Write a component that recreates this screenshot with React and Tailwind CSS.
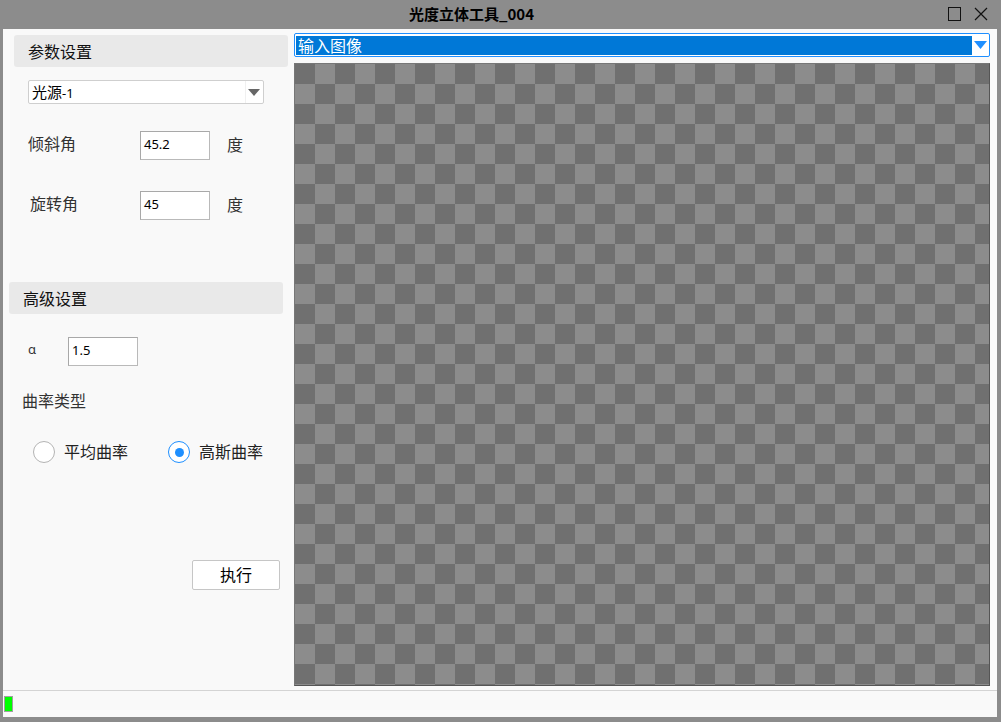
import React from 'react';

const cjk = "font-['Noto_Sans_CJK_SC','Noto_Sans',sans-serif]";
const num = "font-['Noto_Sans','Liberation_Sans',sans-serif]";

function NumBox({ value, className = '' }) {
  return (
    <div className={`h-[29px] w-[70px] border border-[#b9b9b9] border-t-[#a8a8a8] border-l-[#a8a8a8] bg-white pl-[3px] pt-[3px] text-[13px] leading-[18px] text-black ${num} ${className}`}>
      {value}
    </div>
  );
}

function SectionHead({ title, className = '' }) {
  return (
    <div className={`flex h-[32px] w-[274px] items-center rounded-[3px] bg-[#e9e9e9] pl-[14px] text-[16px] text-[#111] ${className}`}>
      {title}
    </div>
  );
}

function Radio({ checked, label }) {
  return (
    <div className="flex items-center">
      {checked ? (
        <div className="flex h-[22px] w-[22px] items-center justify-center rounded-full border border-[#1e8fff] bg-white">
          <div className="h-[9px] w-[9px] rounded-full bg-[#1e8fff]" />
        </div>
      ) : (
        <div className="h-[22px] w-[22px] rounded-full border border-[#b4b4b4] bg-white" />
      )}
      <span className="-mt-[3px] ml-[9px] text-[16px] text-[#222]">{label}</span>
    </div>
  );
}

export default function App() {
  return (
    <div className={`flex h-[722px] w-[1001px] flex-col bg-[#8c8c8c] ${cjk}`}>
      {/* title bar */}
      <div className="relative flex h-[29px] items-center justify-center pr-[58px]">
        <span className="text-[15px] font-bold text-black">光度立体工具_004</span>
        <div className="absolute right-[13px] top-[7px] flex items-center gap-[13px]">
          <div className="h-[14px] w-[13px] border border-[#111]" />
          <svg width="14" height="14" viewBox="0 0 14 14">
            <path d="M1 1 L13 13 M13 1 L1 13" stroke="#111" strokeWidth="1.2" />
          </svg>
        </div>
      </div>

      <div className="ml-[3px] mr-[4px] flex h-[688px] flex-col bg-[#f9f9f9]">
        <div className="flex h-[661px]">
          {/* left panel */}
          <div className="flex w-[291px] flex-col">
            <SectionHead title="参数设置" className="ml-[11px] mt-[6px] w-[269px]" />

            <div className="ml-[25px] mt-[13px] flex h-[24px] w-[236px] items-center justify-between rounded-[2px] border border-[#cfcfcf] bg-white">
              <span className="pl-[3px] text-[15px] text-black">
                光源<span className={`text-[13px] ${num}`}>-1</span>
              </span>
              <div className="mr-[1px] flex h-full w-[17px] items-center justify-center border-l border-[#f0f0f0]">
                <svg width="12" height="7" viewBox="0 0 12 7">
                  <path d="M0 0 L12 0 L6 7 Z" fill="#666" />
                </svg>
              </div>
            </div>

            <div className="mt-[27px] flex items-center">
              <span className="-mt-[5px] ml-[25px] w-[112px] text-[16px] text-[#333]">倾斜角</span>
              <NumBox value="45.2" />
              <span className="-mt-[3px] ml-[17px] text-[16px] text-[#333]">度</span>
            </div>

            <div className="mt-[31px] flex items-center">
              <span className="-mt-[5px] ml-[27px] w-[110px] text-[16px] text-[#333]">旋转角</span>
              <NumBox value="45" />
              <span className="-mt-[3px] ml-[17px] text-[16px] text-[#333]">度</span>
            </div>

            <SectionHead title="高级设置" className="ml-[6px] mt-[62px]" />

            <div className="mt-[23px] flex items-center">
              <span className={`-mt-[3px] ml-[25px] w-[40px] text-[13px] text-[#333] ${num}`}>α</span>
              <NumBox value="1.5" />
            </div>

            <div className="ml-[19px] mt-[23px] text-[16px] leading-[22px] text-[#333]">曲率类型</div>

            <div className="ml-[30px] mt-[30px] flex items-center">
              <Radio label="平均曲率" />
              <div className="ml-[40px]">
                <Radio checked label="高斯曲率" />
              </div>
            </div>

            <button className="ml-[189px] mt-[97px] h-[30px] w-[88px] rounded-[2px] border border-[#c6c6c6] bg-white pb-[2px] text-[16px] text-black">
              执行
            </button>
          </div>

          {/* right panel */}
          <div className="flex w-[696px] flex-col pt-[4px]">
            <div className="flex h-[24px] items-center rounded-[2px] border border-[#1e8fff] bg-white pl-[1px]">
              <div className="flex h-[19px] w-[676px] items-center bg-[#0078d7] pl-[2px] text-[16px] text-white">
                输入图像
              </div>
              <div className="flex flex-1 items-center justify-center">
                <svg width="13" height="8" viewBox="0 0 13 8">
                  <path d="M0 0 L13 0 L6.5 8 Z" fill="#1e8fff" />
                </svg>
              </div>
            </div>
            <div className="mt-[6px] h-[623px] border border-[#777] border-r-[#555] border-b-[#555] bg-[image:conic-gradient(#8c8c8c_25%,#707070_0_50%,#8c8c8c_0_75%,#707070_0)] bg-[length:40px_40px]" />
          </div>
        </div>

        {/* status bar */}
        <div className="h-[27px] border-t border-[#d4d4d4]">
          <div className="ml-[1px] mt-[5px] h-[16px] w-[9px] border border-[#a0a0a0] bg-[#00ff00]" />
        </div>
      </div>
    </div>
  );
}
